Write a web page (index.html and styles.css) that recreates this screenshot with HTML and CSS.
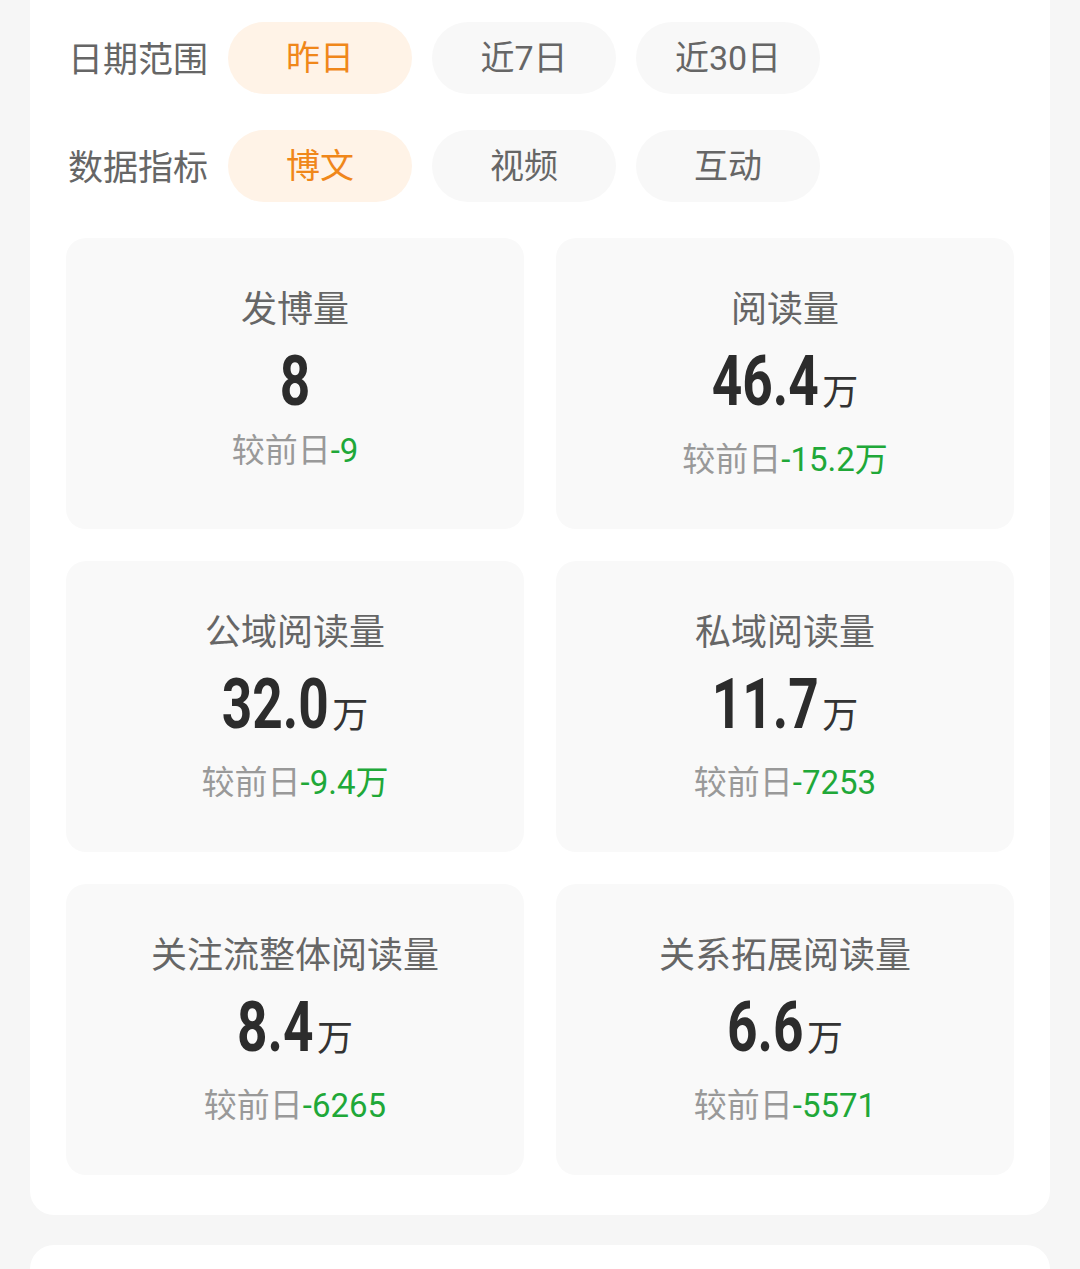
FILE: index.html
```html
<!DOCTYPE html>
<html>
<head>
    <meta charset="UTF-8">
    <meta name="viewport" content="width=device-width, initial-scale=1">
    <title>数据概览</title>
    <link rel="stylesheet" href="styles.css">
</head>
<body>

<section class="panel">
    <div class="filter-row">
        <span class="filter-label">日期范围</span>
        <span class="pill active">昨日</span>
        <span class="pill">近7日</span>
        <span class="pill">近30日</span>
    </div>
    <div class="filter-row">
        <span class="filter-label">数据指标</span>
        <span class="pill active">博文</span>
        <span class="pill">视频</span>
        <span class="pill">互动</span>
    </div>

    <div class="stats">
        <div class="stat">
            <div class="stat-title">发博量</div>
            <div class="stat-value">8</div>
            <div class="stat-diff">较前日<em>-9</em></div>
        </div>
        <div class="stat">
            <div class="stat-title">阅读量</div>
            <div class="stat-value">46.4<span class="unit">万</span></div>
            <div class="stat-diff">较前日<em>-15.2万</em></div>
        </div>
        <div class="stat">
            <div class="stat-title">公域阅读量</div>
            <div class="stat-value">32.0<span class="unit">万</span></div>
            <div class="stat-diff">较前日<em>-9.4万</em></div>
        </div>
        <div class="stat">
            <div class="stat-title">私域阅读量</div>
            <div class="stat-value">11.7<span class="unit">万</span></div>
            <div class="stat-diff">较前日<em>-7253</em></div>
        </div>
        <div class="stat">
            <div class="stat-title">关注流整体阅读量</div>
            <div class="stat-value">8.4<span class="unit">万</span></div>
            <div class="stat-diff">较前日<em>-6265</em></div>
        </div>
        <div class="stat">
            <div class="stat-title">关系拓展阅读量</div>
            <div class="stat-value">6.6<span class="unit">万</span></div>
            <div class="stat-diff">较前日<em>-5571</em></div>
        </div>
    </div>
</section>

<section class="panel next"></section>

</body>
</html>
```

FILE: styles.css
```css
*, *::after, *::before {
    box-sizing: border-box;
}

html, body {
    margin: 0;
    padding: 0;
    background-color: #f6f6f6;
    font-family: Roboto, "Noto Sans CJK SC", sans-serif;
}

.panel {
    margin: 0 30px;
    padding: 22px 36px 40px;
    background: #fff;
    border-radius: 0 0 24px 24px;
}

.panel.next {
    margin-top: 30px;
    height: 200px;
    border-radius: 24px 24px 0 0;
}

.filter-row {
    display: flex;
    align-items: center;
    gap: 20px;
    height: 72px;
    margin-bottom: 36px;
}

.filter-label {
    width: 142px;
    padding-top: 5px;
    padding-left: 2px;
    font-size: 35px;
    line-height: 72px;
    color: #666;
    white-space: nowrap;
}

.pill {
    width: 184px;
    height: 72px;
    line-height: 72px;
    border-radius: 36px;
    text-align: center;
    font-size: 34px;
    color: #666;
    background: #f8f8f8;
}

.pill.active {
    color: #f0871a;
    background: #fff3e7;
}

.stats {
    display: grid;
    grid-template-columns: 1fr 1fr;
    gap: 32px;
}

.stat {
    height: 291px;
    padding-top: 50px;
    border-radius: 20px;
    background: #f9f9f9;
    text-align: center;
}

.stat-title {
    font-size: 36px;
    line-height: 44px;
    color: #666;
}

/* digits are drawn narrow, the unit is stretched back to normal width */
.stat-value {
    margin-top: 14px;
    font-family: Roboto, sans-serif;
    font-weight: bold;
    font-size: 70px;
    line-height: 70px;
    color: #2c2c2c;
    transform: scaleX(0.76);
}

.stat-value .unit {
    display: inline-block;
    margin-left: 5px;
    margin-right: 11px;
    font-family: "Noto Sans CJK SC", sans-serif;
    font-weight: normal;
    font-size: 36px;
    line-height: 72px;
    color: #333;
    transform: scaleX(1.316);
    transform-origin: left;
}

.stat-diff {
    margin-top: 15px;
    font-size: 33px;
    line-height: 40px;
    color: #999;
}

.stat-diff em {
    font-style: normal;
    color: #20a838;
}
```
